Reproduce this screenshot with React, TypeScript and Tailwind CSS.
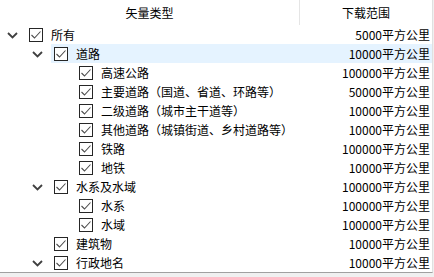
import React from 'react';

type Row = { label: string; value: string; level: number; expandable?: boolean; selected?: boolean };

const rows: Row[] = [
  { label: '所有', value: '5000平方公里', level: 0, expandable: true },
  { label: '道路', value: '10000平方公里', level: 1, expandable: true, selected: true },
  { label: '高速公路', value: '100000平方公里', level: 2 },
  { label: '主要道路（国道、省道、环路等）', value: '50000平方公里', level: 2 },
  { label: '二级道路（城市主干道等）', value: '10000平方公里', level: 2 },
  { label: '其他道路（城镇街道、乡村道路等）', value: '10000平方公里', level: 2 },
  { label: '铁路', value: '100000平方公里', level: 2 },
  { label: '地铁', value: '10000平方公里', level: 2 },
  { label: '水系及水域', value: '100000平方公里', level: 1, expandable: true },
  { label: '水系', value: '100000平方公里', level: 2 },
  { label: '水域', value: '100000平方公里', level: 2 },
  { label: '建筑物', value: '10000平方公里', level: 1 },
  { label: '行政地名', value: '10000平方公里', level: 1, expandable: true },
];

const indent = ['w-0', 'w-[25px]', 'w-[50px]'];

function Chevron() {
  return (
    <svg width="11" height="7" viewBox="0 0 11 7" className="mt-[1px]">
      <polyline points="1,1 5.5,5.5 10,1" fill="none" stroke="#404040" strokeWidth="1.8" />
    </svg>
  );
}

function Check() {
  return (
    <div className="w-[14px] h-[14px] border border-[#262626] bg-white flex items-center justify-center shrink-0">
      <svg width="12" height="12" viewBox="0 0 12 12">
        <polyline points="1.5,6 4.5,9 10.5,2.5" fill="none" stroke="#4d4d4d" strokeWidth="1.1" />
      </svg>
    </div>
  );
}

export default function App() {
  return (
    <div
      className="w-[434px] h-[277px] bg-[#f0f0f0] overflow-hidden text-[12px] text-black"
      style={{ fontFamily: '"Noto Sans CJK SC", "Liberation Sans", sans-serif' }}
    >
      <div className="w-[432px] h-[272px] bg-white border-r border-[#e0e0e0] border-b border-b-[#a0a0a0] box-content">
        {/* header */}
        <div className="flex h-[25px] items-center">
          <div className="w-[300px] h-full flex items-center justify-center border-r border-[#e5e5e5] pt-[1px]">
            矢量类型
          </div>
          <div className="flex-1 h-full flex items-center justify-center pt-[1px]">下载范围</div>
        </div>

        {rows.map((r, i) => (
          <div key={i} className="flex h-[19px] items-stretch">
            <div className={`${indent[r.level]} shrink-0`} />
            <div className="w-[25px] shrink-0 flex items-center justify-center">
              {r.expandable && <Chevron />}
            </div>
            <div
              className={`flex-1 flex items-center pl-[3px] pr-[2px] ml-[1px] ${r.selected ? 'bg-[#e5f3ff]' : ''}`}
            >
              <Check />
              <span className="ml-[8px] whitespace-nowrap leading-none">{r.label}</span>
              <span className="ml-auto whitespace-nowrap leading-none">{r.value}</span>
            </div>
          </div>
        ))}
      </div>
    </div>
  );
}
